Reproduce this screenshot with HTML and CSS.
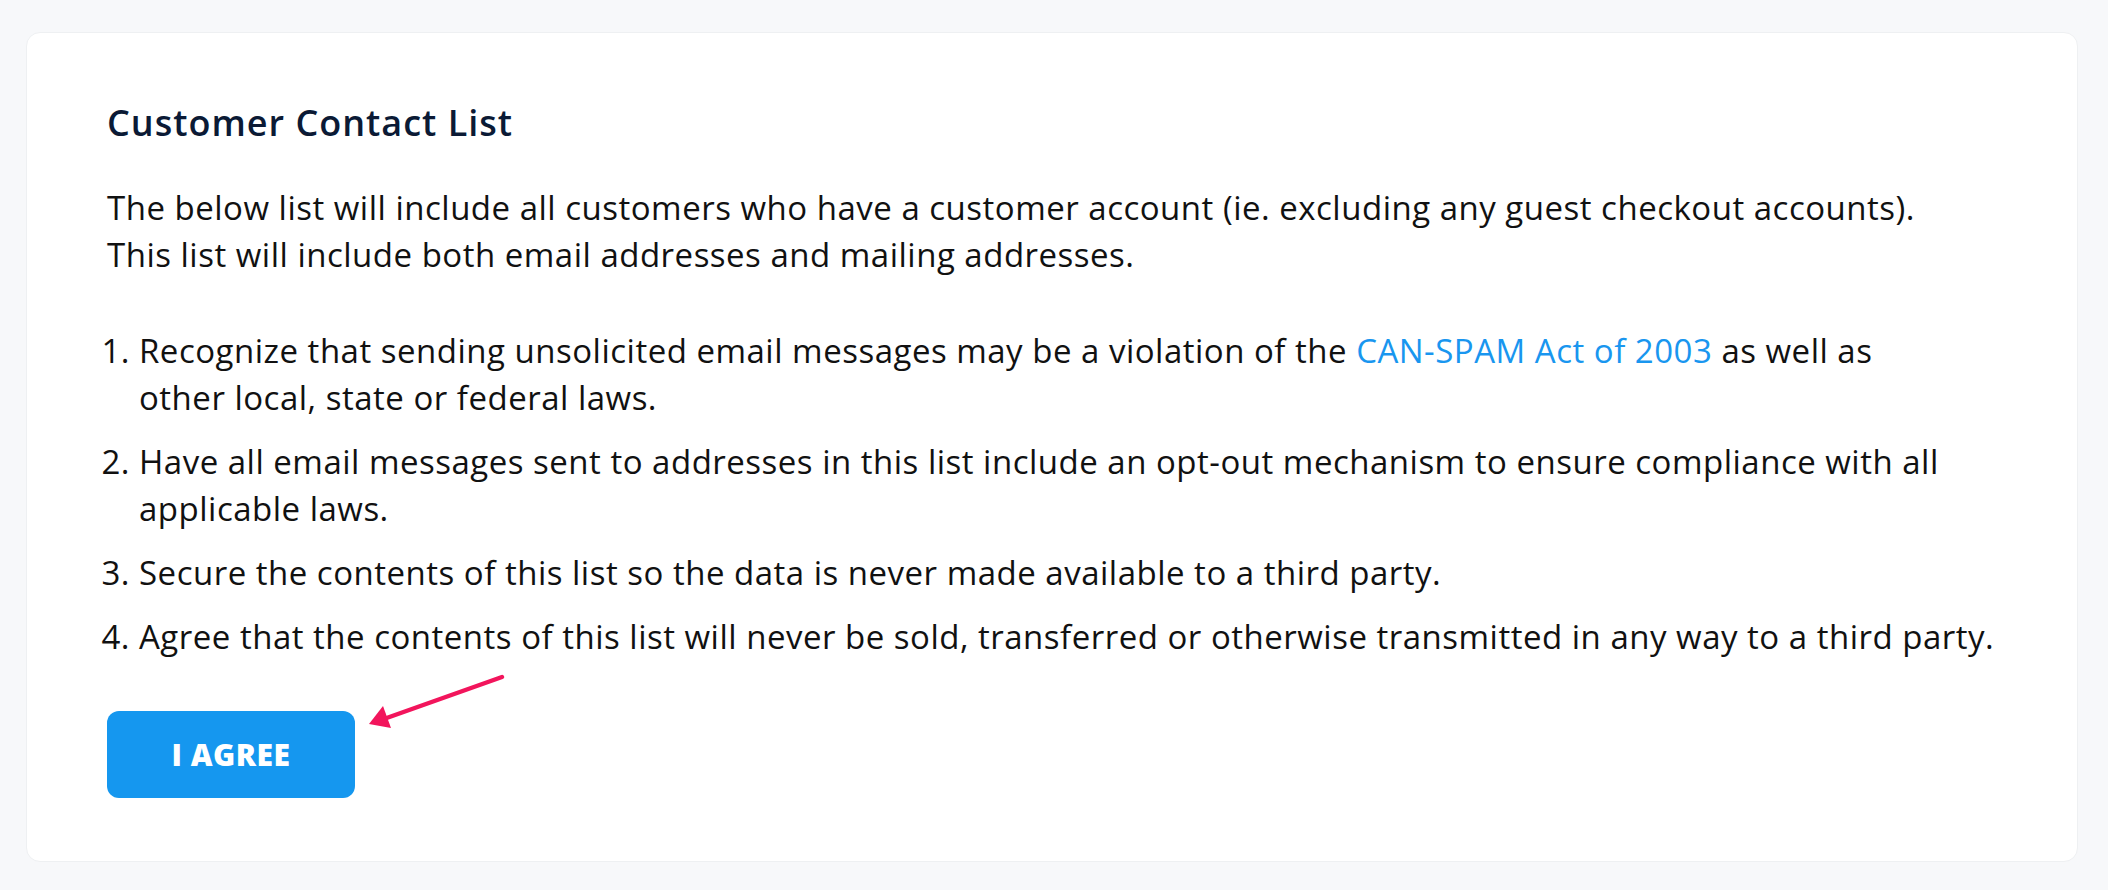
FILE: index.html
```html
<!DOCTYPE html>
<html lang="en">
<head>
    <meta charset="UTF-8">
    <meta name="viewport" content="width=device-width, initial-scale=1.0">
    <title>Customer Contact List</title>
    <link rel="stylesheet" href="styles.css">
</head>
<body>
    <div class="container">
        <h2 class="title">Customer Contact List</h2>
        <p class="intro">
            The below list will include all customers who have a customer account (ie. excluding any guest checkout accounts).<br>
            This list will include both email addresses and mailing addresses.
        </p>

        <ol class="terms">
            <li>Recognize that sending unsolicited email messages may be a violation of the <a href="#">CAN-SPAM Act of 2003</a> as well as<br>other local, state or federal laws.</li>
            <li>Have all email messages sent to addresses in this list include an opt-out mechanism to ensure compliance with all applicable laws.</li>
            <li>Secure the contents of this list so the data is never made available to a third party.</li>
            <li>Agree that the contents of this list will never be sold, transferred or otherwise transmitted in any way to a third party.</li>
        </ol>

        <div class="actions">
            <button type="button" class="agree">I AGREE</button>
            <!-- annotation arrow pointing at the button -->
            <svg class="pointer" width="150" height="62" viewBox="0 0 150 62">
                <line x1="145" y1="6" x2="24" y2="49" stroke="#f2155c" stroke-width="4.5" stroke-linecap="round"/>
                <polygon points="12,53 26,35 34,57" fill="#f2155c"/>
            </svg>
        </div>
    </div>
</body>
</html>
```

FILE: styles.css
```css
body {
    margin: 0;
    padding: 32px 30px 27px 26px;
    background-color: #f7f8fa;
    font-family: "Open Sans", Arial, sans-serif;
    color: #111;
}
.container {
    background-color: #fff;
    border: 1px solid #eef0f2;
    border-radius: 14px;
    padding: 66px 80px 63px 80px;
    display: flex;
    flex-direction: column;
    align-items: flex-start;
}
.title {
    margin: 0 0 37px 0;
    font-size: 36px;
    line-height: 48px;
    font-weight: 600;
    letter-spacing: 1px;
    color: #0b1a35;
}
.intro {
    margin: 0 0 49px 0;
    font-size: 33px;
    line-height: 47px;
    letter-spacing: 0.5px;
}
.terms {
    margin: 0 0 34px 0;
    padding-left: 32px;
    font-size: 33px;
    line-height: 47px;
    letter-spacing: 0.5px;
}
.terms li {
    margin-bottom: 17px;
}
.terms a {
    color: #1996ef;
    text-decoration: none;
}
.actions {
    position: relative;
}
.agree {
    width: 248px;
    height: 87px;
    border: none;
    border-radius: 12px;
    background-color: #1597ef;
    color: #fff;
    font-family: "Open Sans", Arial, sans-serif;
    font-size: 30px;
    font-weight: 800;
    letter-spacing: 0.5px;
    cursor: pointer;
}
.pointer {
    position: absolute;
    left: 250px;
    top: -40px;
}
```
